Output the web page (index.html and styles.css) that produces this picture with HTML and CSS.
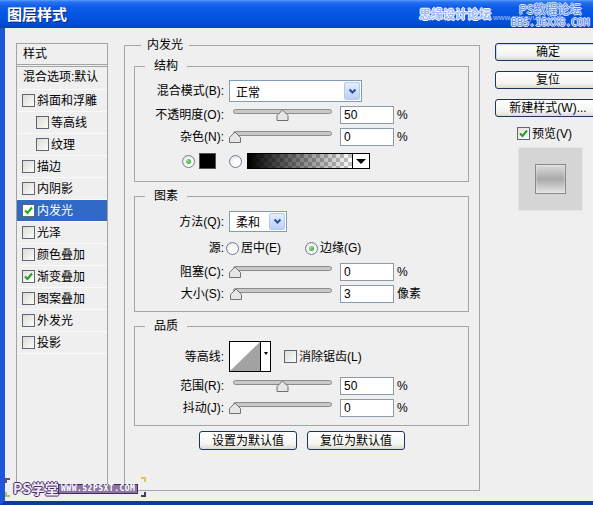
FILE: index.html
```html
<!DOCTYPE html>
<html>
<head>
<meta charset="utf-8">
<title>图层样式</title>
<link rel="stylesheet" href="styles.css">
</head>
<body>
<div class="win">
  <div class="titlebar">
    <span class="title">图层样式</span>
    <span class="wm wm1">思缘设计论坛</span>
    <span class="wm wm2">www.missyuan.com</span>
    <span class="wm wm3">PS教程论坛</span>
    <span class="wm wm4">BBS.16XX8.COM</span>
  </div>
  <div class="client">
    <div class="list">
      <div class="lhead">样式</div>
      <div class="lblend">混合选项:默认</div>
      <div class="li"><i class="cb"></i><span>斜面和浮雕</span></div>
      <div class="li ind"><i class="cb"></i><span>等高线</span></div>
      <div class="li ind"><i class="cb"></i><span>纹理</span></div>
      <div class="li"><i class="cb"></i><span>描边</span></div>
      <div class="li"><i class="cb"></i><span>内阴影</span></div>
      <div class="li sel"><i class="cb on"><svg width="11" height="11" viewBox="0 0 11 11"><path d="M2 5.5 L4.5 8 L9 2.5" fill="none" stroke="#21a121" stroke-width="2"/></svg></i><span>内发光</span></div>
      <div class="li"><i class="cb"></i><span>光泽</span></div>
      <div class="li"><i class="cb"></i><span>颜色叠加</span></div>
      <div class="li"><i class="cb on"><svg width="11" height="11" viewBox="0 0 11 11"><path d="M2 5.5 L4.5 8 L9 2.5" fill="none" stroke="#21a121" stroke-width="2"/></svg></i><span>渐变叠加</span></div>
      <div class="li"><i class="cb"></i><span>图案叠加</span></div>
      <div class="li"><i class="cb"></i><span>外发光</span></div>
      <div class="li"><i class="cb"></i><span>投影</span></div>
    </div>

    <fieldset class="main">
      <legend class="lg-main">内发光</legend>

      <fieldset class="sub s1">
        <legend class="lg-sub">结构</legend>
        <div class="row h22 mt0">
          <span class="lab">混合模式(B):</span>
          <div class="select w133"><span class="sv">正常</span><span class="dd"><svg width="9" height="7" viewBox="0 0 9 7"><path d="M1.5 1.5 L4.5 4.5 L7.5 1.5" fill="none" stroke="#2c4c9c" stroke-width="2"/></svg></span></div>
        </div>
        <div class="row h18 mt4">
          <span class="lab">不透明度(O):</span>
          <svg class="slider" width="106" height="12" viewBox="0 0 106 12"><rect x="4.5" y="0.5" width="98" height="4" rx="2" fill="#c9c9c9" stroke="#8c8c8c"/><path d="M48 11.5 H59 V6.5 L53.5 1 L48 6.5 Z" fill="#e6e6e6" stroke="#707070"/></svg>
          <span class="num">50</span><span class="unit">%</span>
        </div>
        <div class="row h18 mt4">
          <span class="lab">杂色(N):</span>
          <svg class="slider" width="106" height="12" viewBox="0 0 106 12"><rect x="4.5" y="0.5" width="98" height="4" rx="2" fill="#c9c9c9" stroke="#8c8c8c"/><path d="M0.5 11.5 H11.5 V6.5 L6 1 L0.5 6.5 Z" fill="#e6e6e6" stroke="#707070"/></svg>
          <span class="num">0</span><span class="unit">%</span>
        </div>
        <div class="row h16 mt7">
          <i class="radio on r1"></i>
          <span class="sw"></span>
          <i class="radio r2"></i>
          <div class="grad"><span class="gbar"></span><span class="garr"><i class="tri"></i></span></div>
        </div>
      </fieldset>

      <fieldset class="sub s2">
        <legend class="lg-sub">图素</legend>
        <div class="row h21 mt0">
          <span class="lab">方法(Q):</span>
          <div class="select w58"><span class="sv">柔和</span><span class="dd"><svg width="9" height="7" viewBox="0 0 9 7"><path d="M1.5 1.5 L4.5 4.5 L7.5 1.5" fill="none" stroke="#2c4c9c" stroke-width="2"/></svg></span></div>
        </div>
        <div class="row h14 mt9">
          <span class="lab">源:</span>
          <i class="radio r3"></i><span class="rt">居中(E)</span>
          <i class="radio on r4"></i><span class="rt">边缘(G)</span>
        </div>
        <div class="row h18 mt8">
          <span class="lab">阻塞(C):</span>
          <svg class="slider" width="106" height="12" viewBox="0 0 106 12"><rect x="4.5" y="0.5" width="98" height="4" rx="2" fill="#c9c9c9" stroke="#8c8c8c"/><path d="M0.5 11.5 H11.5 V6.5 L6 1 L0.5 6.5 Z" fill="#e6e6e6" stroke="#707070"/></svg>
          <span class="num">0</span><span class="unit">%</span>
        </div>
        <div class="row h18 mt4">
          <span class="lab">大小(S):</span>
          <svg class="slider" width="106" height="12" viewBox="0 0 106 12"><rect x="4.5" y="0.5" width="98" height="4" rx="2" fill="#c9c9c9" stroke="#8c8c8c"/><path d="M1.5 11.5 H12.5 V6.5 L7 1 L1.5 6.5 Z" fill="#e6e6e6" stroke="#707070"/></svg>
          <span class="num">3</span><span class="unit">像素</span>
        </div>
      </fieldset>

      <fieldset class="sub s3">
        <legend class="lg-sub">品质</legend>
        <div class="row h31 mt0">
          <span class="lab">等高线:</span>
          <div class="contour"><span class="cpic"><svg width="30" height="29" viewBox="0 0 30 29"><polygon points="0,29 30,0 30,29" fill="#a3a3a3"/></svg></span><span class="carr"><i class="tri sm"></i></span></div>
          <i class="cb cbq"></i><span class="rt">消除锯齿(L)</span>
        </div>
        <div class="row h18 mt5">
          <span class="lab">范围(R):</span>
          <svg class="slider" width="106" height="12" viewBox="0 0 106 12"><rect x="4.5" y="0.5" width="98" height="4" rx="2" fill="#c9c9c9" stroke="#8c8c8c"/><path d="M48 11.5 H59 V6.5 L53.5 1 L48 6.5 Z" fill="#e6e6e6" stroke="#707070"/></svg>
          <span class="num">50</span><span class="unit">%</span>
        </div>
        <div class="row h18 mt4">
          <span class="lab">抖动(J):</span>
          <svg class="slider" width="106" height="12" viewBox="0 0 106 12"><rect x="4.5" y="0.5" width="98" height="4" rx="2" fill="#c9c9c9" stroke="#8c8c8c"/><path d="M0.5 11.5 H11.5 V6.5 L6 1 L0.5 6.5 Z" fill="#e6e6e6" stroke="#707070"/></svg>
          <span class="num">0</span><span class="unit">%</span>
        </div>
      </fieldset>

      <div class="btns">
        <div class="btn">设置为默认值</div>
        <div class="btn">复位为默认值</div>
      </div>
    </fieldset>

    <div class="side">
      <div class="sbtn def">确定</div>
      <div class="sbtn">复位</div>
      <div class="sbtn">新建样式(W)...</div>
      <div class="prev"><i class="cb on"><svg width="11" height="11" viewBox="0 0 11 11"><path d="M2 5.5 L4.5 8 L9 2.5" fill="none" stroke="#21a121" stroke-width="2"/></svg></i><span>预览(V)</span></div>
      <div class="pbox"><div class="pin"></div></div>
    </div>
  </div>

  <div class="wmb">
    <i class="cor c-tl"></i><i class="cor c-bl"></i><i class="cor c-tr"></i><i class="cor c-br"></i>
    <span class="wmb1">PS学堂</span>
    <span class="wmb2">WWW.52PSXT.COM</span>
  </div>
</div>
</body>
</html>
```

FILE: styles.css
```css
* { box-sizing: border-box; }
html, body { margin: 0; padding: 0; }
body {
  width: 593px; height: 505px; overflow: hidden;
  background: #efefef;
  font-family: "Liberation Sans", "Noto Sans CJK SC", sans-serif;
  font-size: 12px; color: #000;
}
.win {
  position: relative; width: 593px; height: 505px; overflow: hidden;
  display: flex; flex-direction: column; background: #efefef;
}

/* title bar */
.titlebar {
  position: relative; height: 28px; flex-shrink: 0;
  background: linear-gradient(#5a9cff 0, #2a72f4 2px, #0c5ce8 7px, #0556e2 50%, #024bd6 88%, #0140b8 100%);
  display: flex; align-items: center; padding-left: 7px;
}
.title {
  color: #fff; font-weight: bold; font-size: 15px; line-height: 18px;
  font-family: "Noto Sans CJK SC", sans-serif;
  text-shadow: 1px 1px 0 #0a2b86;
}
.wm { position: absolute; white-space: nowrap; font-family: "Noto Sans CJK SC", sans-serif; }
.wm1 {
  left: 419px; top: 6px; font-size: 12px; line-height: 15px; font-weight: bold;
  color: #9cb8ff;
  text-shadow: -1px 0 #fff, 1px 0 #fff, 0 -1px #fff, 0 1px #fff;
}
.wm2 { left: 493px; top: 13px; font-size: 8px; line-height: 9px; color: #a9c2ff; font-family: "Liberation Sans", sans-serif; }
.wm3 {
  left: 519px; top: 2px; font-size: 12px; line-height: 14px;
  color: #5f8ef0;
  text-shadow: -1px 0 #dfe9ff, 1px 0 #dfe9ff, 0 -1px #dfe9ff, 0 1px #dfe9ff;
}
.wm4 {
  left: 511px; top: 17px; font-size: 10px; line-height: 11px;
  color: #5f8ef0; font-family: "DejaVu Sans Mono", monospace;
  text-shadow: -1px 0 #e6eeff, 1px 0 #e6eeff, 0 -1px #e6eeff, 0 1px #e6eeff;
}

/* client area */
.client {
  flex: 1; display: flex; align-items: flex-start;
  padding: 10px 0 0 11px;
  border-left: 5px solid #1b57d8;
  border-bottom: 4px solid #0e3a9e;
}

/* styles list */
.list {
  flex-shrink: 0; width: 92px; height: 449px; margin-top: 5px;
  border: 1px solid #a3a3a3;
}
.lhead {
  height: 23px; padding-left: 6px; line-height: 18px; padding-top: 1px;
  border-bottom: 3px double #a3a3a3;
}
.lblend {
  height: 23px; padding-left: 6px; line-height: 18px; padding-top: 1px;
  border-bottom: 1px solid #fafafa;
}
.li {
  height: 22px; display: flex; align-items: center;
  padding-left: 5px; border-bottom: 1px solid #fafafa;
}
.li.ind { padding-left: 19px; }
.li.sel { background: #316ac5; color: #fff; }
.li span { margin-left: 2px; line-height: 14px; }

.cb {
  display: inline-flex; align-items: center; justify-content: center;
  width: 13px; height: 13px; flex-shrink: 0;
  border: 1px solid #5c6676;
  background: linear-gradient(135deg, #dcdcd6, #fbfbf9);
}
.cb.on { background: linear-gradient(135deg, #e2e2dc, #ffffff); }
.li.sel .cb { background: #fff; }

/* main group */
.main {
  flex-shrink: 0; width: 356px; height: 453px; margin: 0 0 0 16px; padding: 0;
  border: 1px solid #a5a5a5;
  min-inline-size: 0;
}
legend { line-height: 14px; height: 14px; }
.lg-main { margin-left: 16px; padding: 0 6px; }
.lg-sub { margin-left: 10px; padding: 0 9px; }

.sub {
  margin: 7px 10px 0 9px; padding: 0;
  border: 1px solid #a5a5a5;
  min-inline-size: 0;
}
.s1 { padding: 7px 0 12px 0; }
.s2 { padding: 8px 0 8px 0; }
.s3 { padding: 8px 0 8px 0; }

.row { display: flex; align-items: center; }
.h14 { height: 14px; }
.h16 { height: 16px; }
.h18 { height: 18px; }
.h21 { height: 21px; }
.h22 { height: 22px; }
.h31 { height: 31px; }
.mt0 { margin-top: 0; }
.mt4 { margin-top: 4px; }
.mt5 { margin-top: 5px; }
.mt7 { margin-top: 7px; }
.mt8 { margin-top: 8px; }
.mt9 { margin-top: 9px; }

.lab { width: 89px; flex-shrink: 0; text-align: right; line-height: 14px; white-space: nowrap; }

.select {
  display: flex; align-items: stretch; height: 100%;
  margin-left: 5px; border: 1px solid #7f9db9; background: #fff;
}
.w133 { width: 133px; }
.w58 { width: 58px; }
.sv { flex: 1; padding-left: 6px; display: flex; align-items: center; font-size: 12px; }
.dd {
  width: 16px; margin: 1px; border-radius: 2px;
  border: 1px solid #b5c8f0;
  background: linear-gradient(#e6eefe, #bccffa);
  display: flex; align-items: center; justify-content: center;
}

.slider { margin-left: 5px; flex-shrink: 0; display: block; }
.num {
  width: 54px; height: 18px; margin-left: 5px; flex-shrink: 0;
  border: 1px solid #8d9aa8; background: #fff;
  padding-left: 3px; line-height: 16px; font-size: 12px;
}
.unit { margin-left: 3px; line-height: 14px; }

.radio {
  display: inline-flex; align-items: center; justify-content: center;
  width: 13px; height: 13px; border-radius: 50%; flex-shrink: 0;
  border: 1px solid #6a7c94;
  background: radial-gradient(circle at 60% 65%, #ffffff 30%, #dcdcd8 100%);
}
.radio.on::after {
  content: ""; width: 5px; height: 5px; border-radius: 50%;
  background: radial-gradient(circle at 35% 35%, #8ee08e, #21a121);
}
.r1 { margin-left: 47px; }
.r2 { margin-left: 13px; }
.r3 { margin-left: 2px; }
.r4 { margin-left: 24px; }
.rt { margin-left: 2px; line-height: 14px; white-space: nowrap; }

.sw { width: 17px; height: 16px; margin-left: 4px; background: #000; border: 1px solid #555; flex-shrink: 0; }
.grad {
  display: flex; width: 123px; height: 16px; margin-left: 5px;
  border: 1px solid #000; flex-shrink: 0;
}
.gbar {
  flex: 1;
  background-image: linear-gradient(to right, #000, rgba(0,0,0,0)), repeating-conic-gradient(#c4c4c4 0 25%, #ffffff 0 50%);
  background-size: auto, 8px 8px;
}
.garr {
  width: 17px; border-left: 1px solid #000; background: #fff;
  display: flex; align-items: center; justify-content: center;
}
.tri {
  width: 0; height: 0;
  border-left: 5px solid transparent; border-right: 5px solid transparent; border-top: 5px solid #000;
}
.tri.sm { border-left-width: 2px; border-right-width: 2px; border-top-width: 3px; margin-bottom: 6px; }

.contour {
  display: flex; width: 42px; height: 31px; margin-left: 5px; flex-shrink: 0;
  border: 1px solid #000; background: #fff;
}
.cpic { width: 30px; display: block; }
.cpic svg { display: block; }
.carr {
  flex: 1; border-left: 1px solid #000;
  display: flex; align-items: center; justify-content: center;
}
.cbq { margin-left: 13px; background: linear-gradient(135deg, #dcdcd6, #fbfbf9); }

.btns { display: flex; justify-content: center; gap: 10px; margin-top: 5px; }
.btn {
  width: 98px; height: 19px; border: 1px solid #1d3558; border-radius: 3px;
  background: linear-gradient(#ffffff, #f4f4f0 70%, #dedad0);
  display: flex; align-items: center; justify-content: center; line-height: 14px;
}

/* right side */
.side { flex-shrink: 0; width: 106px; margin-left: 15px; margin-top: 5px; }
.sbtn {
  height: 18px; margin-bottom: 10px; border: 1px solid #1d3558; border-radius: 3px;
  background: linear-gradient(#ffffff, #f4f4f0 70%, #dedad0);
  display: flex; align-items: center; justify-content: center; line-height: 14px; white-space: nowrap;
}
.sbtn.def { box-shadow: inset 0 0 0 1px #c6d8f6; }
.prev { display: flex; align-items: center; height: 13px; margin-left: 22px; }
.prev span { margin-left: 2px; line-height: 14px; }
.pbox {
  width: 65px; height: 64px; margin: 7px 0 0 23px;
  background: #d5d5d5; border: 1px solid #e6e6e6;
  display: flex; align-items: center; justify-content: center;
}
.pin {
  width: 31px; height: 30px; border: 1px solid #8a8a8a;
  background: linear-gradient(#dcdcdc, #a9a9a9 50%, #e4e4e4);
  box-shadow: inset 0 0 2px #f4f4f4;
}

/* bottom-left watermark overlay */
.wmb { position: absolute; left: 5px; top: 477px; width: 143px; height: 22px; }
.cor { position: absolute; width: 5px; height: 5px; }
.c-tl { left: 0; top: 1px; border-left: 2px solid #6a4a7a; border-top: 2px solid #6a4a7a; }
.c-bl { left: 0; top: 15px; border-left: 2px solid #a8c070; border-bottom: 2px solid #a8c070; }
.c-tr { left: 136px; top: 0; border-right: 2px solid #d8c860; border-top: 2px solid #d8c860; }
.c-br { left: 136px; top: 15px; border-right: 2px solid #4a3a5a; border-bottom: 2px solid #4a3a5a; }
.wmb1 {
  position: absolute; left: 8px; top: 3px; font-size: 14px; line-height: 16px; font-weight: bold;
  font-family: "Noto Sans CJK SC", sans-serif;
  color: #f2ecfb;
  text-shadow: -1px 0 #4a2a66, 1px 0 #4a2a66, 0 -1px #4a2a66, 0 1px #4a2a66;
}
.wmb2 {
  position: absolute; left: 53px; top: 7px; height: 10px; padding: 0 2px;
  font-family: "DejaVu Sans Mono", monospace; font-size: 8px; line-height: 8px; font-weight: bold;
  color: #ffffff; border: 1px solid #4a2a66; background: #8a76a0;
  letter-spacing: 0.5px;
}
```
